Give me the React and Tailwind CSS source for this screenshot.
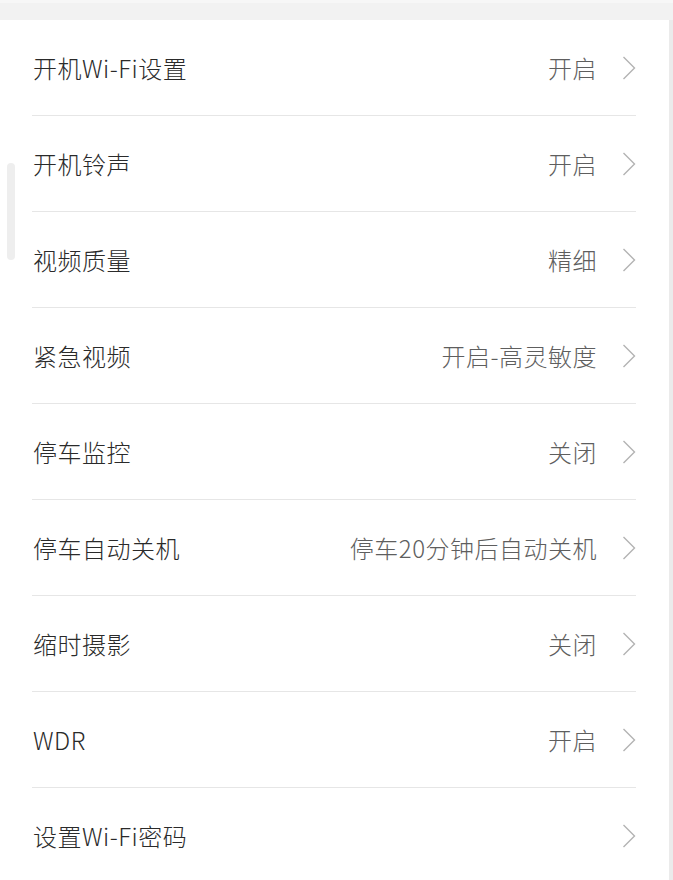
import React from 'react';

const rows = [
  { label: '开机Wi-Fi设置', value: '开启' },
  { label: '开机铃声', value: '开启' },
  { label: '视频质量', value: '精细' },
  { label: '紧急视频', value: '开启-高灵敏度' },
  { label: '停车监控', value: '关闭' },
  { label: '停车自动关机', value: '停车20分钟后自动关机' },
  { label: '缩时摄影', value: '关闭' },
  { label: 'WDR', value: '开启' },
  { label: '设置Wi-Fi密码', value: '' },
];

const Chevron = () => (
  <svg width="14" height="24" viewBox="0 0 14 24" fill="none" className="shrink-0">
    <polyline points="1.5,1 12.5,12 1.5,23" stroke="#b3b3b3" strokeWidth="1.4" />
  </svg>
);

const App = () => {
  return (
    <div
      className="relative w-[673px] h-[880px] overflow-hidden bg-white flex flex-col"
      style={{ fontFamily: '"Noto Sans CJK SC", "Noto Sans", sans-serif' }}
    >
      <div className="h-[20px] shrink-0 bg-[#f2f2f2] border-t-[3px] border-[#f7f7f7]"></div>

      <div className="flex flex-1">
        <div className="flex-1 pl-[32px] pr-[33px]">
          {rows.map((row, i) => (
            <div
              key={row.label}
              className={`h-[96px] flex items-center justify-between ${
                i < rows.length - 1 ? 'border-b border-[#e6e6e6]' : ''
              }`}
            >
              <span className="text-[24px] font-light tracking-[0.5px] text-[#2a2a2a] pl-px">{row.label}</span>
              <div className="flex items-center gap-[25px]">
                {row.value && (
                  <span className="text-[24px] font-light tracking-[0.5px] text-[#5e5e5e]">{row.value}</span>
                )}
                <Chevron />
              </div>
            </div>
          ))}
        </div>
        <div className="w-[4px] bg-[#ebebeb]"></div>
      </div>

      {/* scroll indicator */}
      <div className="absolute left-[7px] top-[163px] w-[8px] h-[97px] rounded-full bg-[#eeeeee]"></div>
    </div>
  );
};

export default App;
